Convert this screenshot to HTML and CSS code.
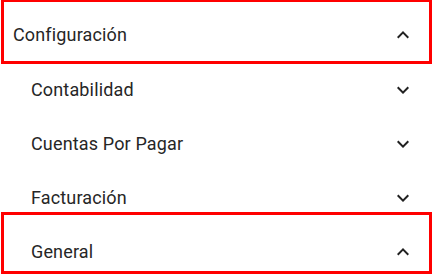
FILE: index.html
```html
<!DOCTYPE html>
<html lang="es">
<head>
<meta charset="utf-8">
<title>Menú</title>
<link rel="stylesheet" href="styles.css">
</head>
<body>
<nav class="menu">
  <div class="item item-top marked marked-top">
    <span class="label">Configuración</span>
    <svg class="chev" viewBox="0 0 24 24" width="24" height="24"><path d="M7.41 15.41 12 10.83l4.59 4.58L18 14l-6-6-6 6z"/></svg>
  </div>
  <div class="sub">
    <div class="item item-sub">
      <span class="label">Contabilidad</span>
      <svg class="chev" viewBox="0 0 24 24" width="24" height="24"><path d="M7.41 8.59 12 13.17l4.59-4.58L18 10l-6 6-6-6z"/></svg>
    </div>
    <div class="item item-sub">
      <span class="label">Cuentas Por Pagar</span>
      <svg class="chev" viewBox="0 0 24 24" width="24" height="24"><path d="M7.41 8.59 12 13.17l4.59-4.58L18 10l-6 6-6-6z"/></svg>
    </div>
    <div class="item item-sub">
      <span class="label">Facturación</span>
      <svg class="chev" viewBox="0 0 24 24" width="24" height="24"><path d="M7.41 8.59 12 13.17l4.59-4.58L18 10l-6 6-6-6z"/></svg>
    </div>
    <div class="item item-sub marked marked-bottom">
      <span class="label">General</span>
      <svg class="chev" viewBox="0 0 24 24" width="24" height="24"><path d="M7.41 15.41 12 10.83l4.59 4.58L18 14l-6-6-6 6z"/></svg>
    </div>
  </div>
</nav>
</body>
</html>
```
FILE: styles.css
```css
html, body {
  margin: 0;
  padding: 0;
  background: #ffffff;
}
body {
  font-family: Roboto, "Liberation Sans", Arial, sans-serif;
  overflow: hidden;
}
.menu {
  width: 432px;
  padding-top: 8px;
  display: flex;
  flex-direction: column;
}
.sub {
  display: flex;
  flex-direction: column;
  padding-top: 1px;
}
.item {
  position: relative;
  height: 54px;
  display: flex;
  align-items: center;
  justify-content: space-between;
  padding-right: 17px;
  color: #262626;
  font-size: 18px;
  line-height: 24px;
  letter-spacing: 0.15px;
}
.item-top {
  padding-left: 13px;
}
.item-sub {
  padding-left: 31px;
}
.chev {
  display: block;
  fill: #212121;
  flex: none;
}
.marked::after {
  content: "";
  position: absolute;
  left: 1px;
  right: 0;
  border: 3px solid #ff0000;
  pointer-events: none;
}
.marked-top::after {
  top: -9px;
  bottom: -2px;
}
.marked-bottom::after {
  top: -13px;
  bottom: 5px;
}
```
